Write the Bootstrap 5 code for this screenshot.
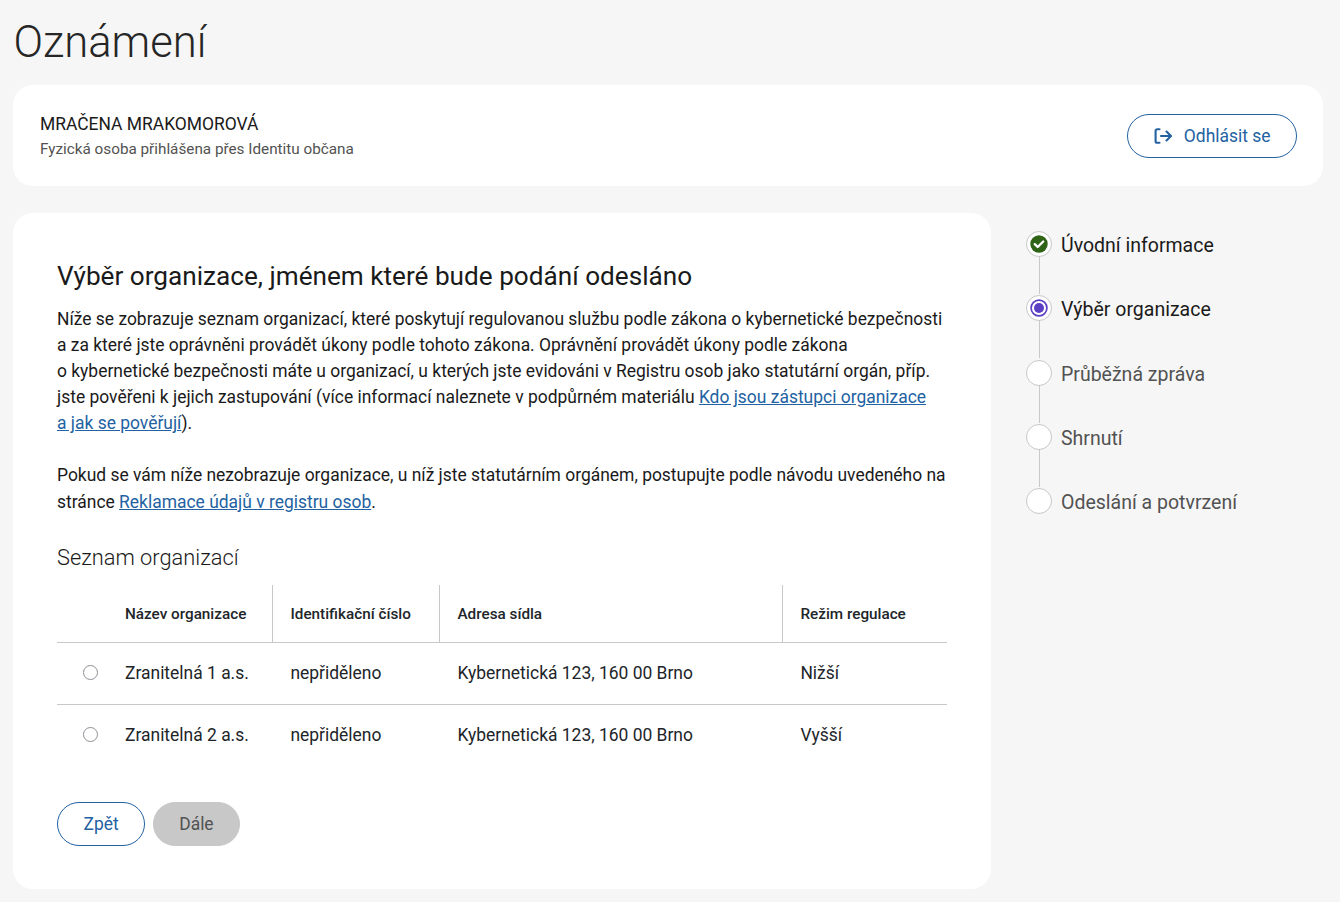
<!DOCTYPE html>
<html lang="cs">

<head>
    <meta charset="UTF-8" />
    <title>Oznámení</title>
    <link rel="stylesheet" href="https://cdn.jsdelivr.net/npm/bootstrap@5.3.3/dist/css/bootstrap.min.css" />
    <style>
        body {
            background: #f6f6f6;
            color: #1a1a1a;
            font-family: Roboto, "Liberation Sans", sans-serif;
            font-size: 17.45px;
            line-height: 26.1px;
        }

        .page-wrap {
            padding: 0 17px 13px 13px;
        }

        .page-title {
            font-size: 43.6px;
            font-weight: 300;
            line-height: 52px;
            margin: 17px 0 16px 0.5px;
            color: #262626;
        }

        .panel {
            background: #fff;
            border-radius: 20px;
        }

        .user-panel {
            padding: 0 26px 0 27px;
            margin-bottom: 27px;
            height: 101px;
        }

        .user-name {
            font-size: 17.45px;
            line-height: 26px;
        }

        .user-sub {
            font-size: 15.27px;
            line-height: 24px;
            color: #525252;
        }

        .btn-round {
            border-radius: 22px;
            height: 44px;
            font-size: 17.45px;
            line-height: 24px;
            padding: 9px 25.5px;
            --bs-btn-color: #2362a2;
            --bs-btn-border-color: #2362a2;
            --bs-btn-hover-color: #fff;
            --bs-btn-hover-bg: #2362a2;
            --bs-btn-hover-border-color: #2362a2;
            --bs-btn-disabled-bg: #c8c8c8;
            --bs-btn-disabled-border-color: #c8c8c8;
            --bs-btn-disabled-color: #525252;
            --bs-btn-disabled-opacity: 1;
        }

        .btn-next {
            padding: 9px 25px;
        }

        .btn-logout {
            padding: 9px 25.5px 9px 26px;
            gap: 11.5px;
        }

        .main-panel {
            width: 978px;
            height: 676px;
            padding: 44px;
            flex: none;
        }

        .main-panel h2 {
            font-size: 26.17px;
            font-weight: 400;
            line-height: 38px;
            margin: 0 0 11px;
        }

        .main-panel p {
            margin: 0 0 26px;
        }

        .main-panel a {
            color: #2362a2;
        }

        .main-panel h3 {
            font-size: 21.8px;
            font-weight: 300;
            line-height: 30px;
            margin: 28px 0 12px;
        }

        .main-panel p:has(+ h3) {
            margin-bottom: 0;
        }

        .org-table {
            --bs-table-bg: transparent;
            margin-bottom: 35px;
            table-layout: fixed;
        }

        .org-table th {
            font-size: 15.27px;
            font-weight: 500;
            height: 58px;
            padding: 2px 18px 0;
            vertical-align: middle;
            border-bottom: 1px solid #c8c8c8;
        }

        .org-table th + th + th,
        .org-table th + th + th + th {
            border-left: 1px solid #c8c8c8;
        }

        .org-table td {
            height: 62px;
            padding: 0 18px 2px 18.4px;
            vertical-align: middle;
            border-bottom: 1px solid #c8c8c8;
        }

        .org-table td:nth-child(2) {
            padding-left: 18px;
        }

        .org-table tr:last-child td {
            border-bottom: 0;
        }

        .org-table td:first-child,
        .org-table th:first-child {
            padding: 0 0 2px 26px;
        }

        .org-radio {
            width: 15px;
            height: 15px;
            margin: 0;
            border-color: #8f8f96;
            display: block;
        }

        .step-list {
            list-style: none;
            margin: -1px 0 0;
            padding: 0 0 0 35px;
        }

        .step-item {
            display: flex;
            align-items: center;
            gap: 9px;
            height: 64.3px;
            color: #525252;
            font-size: 19.5px;
            position: relative;
        }

        .step-item:not(:last-child)::after {
            content: "";
            position: absolute;
            left: 13px;
            top: 44px;
            height: 38px;
            border-left: 1px solid #c8c8c8;
        }

        .step-item.is-on {
            color: #1a1a1a;
        }

        .step-label {
            padding-top: 4px;
        }

        .step-dot {
            width: 26px;
            height: 26px;
            flex: none;
            background: #fff;
            border: 1px solid #c8c8c8;
            border-radius: 50%;
            display: flex;
            align-items: center;
            justify-content: center;
        }
    </style>
</head>

<body>
    <div class="page-wrap">
        <h1 class="page-title">Oznámení</h1>

        <!-- prihlaseny uzivatel -->
        <div class="panel user-panel d-flex justify-content-between align-items-center">
            <div>
                <div class="user-name">MRAČENA MRAKOMOROVÁ</div>
                <div class="user-sub">Fyzická osoba přihlášena přes Identitu občana</div>
            </div>
            <button type="button" class="btn btn-outline-primary btn-round btn-logout d-flex align-items-center">
                <svg width="18" height="18" viewBox="0 0 18 18" fill="none" stroke="currentColor" stroke-width="2.1" stroke-linecap="round" stroke-linejoin="round">
                    <path d="M5.5 2.2H3.2a1.6 1.6 0 0 0-1.6 1.6v10.4a1.6 1.6 0 0 0 1.6 1.6h2.3" />
                    <path d="M7 9h10M12.5 4.5 17 9l-4.5 4.5" />
                </svg>
                Odhlásit se
            </button>
        </div>

        <div class="d-flex">
            <div class="panel main-panel">
                <h2>Výběr organizace, jménem které bude podání odesláno</h2>
                <p>Níže se zobrazuje seznam organizací, které poskytují regulovanou službu podle zákona o kybernetické bezpečnosti a&nbsp;za které jste oprávněni provádět úkony podle tohoto zákona. Oprávnění provádět úkony podle zákona o&nbsp;kybernetické bezpečnosti máte u&nbsp;organizací, u&nbsp;kterých jste evidováni v&nbsp;Registru osob jako statutární orgán, příp. jste pověřeni k&nbsp;jejich zastupování (více informací naleznete v&nbsp;podpůrném materiálu <a href="#">Kdo jsou zástupci organizace a&nbsp;jak se pověřují</a>).</p>
                <p>Pokud se vám níže nezobrazuje organizace, u&nbsp;níž jste statutárním orgánem, postupujte podle návodu uvedeného na stránce <a href="#">Reklamace údajů v&nbsp;registru osob</a>.</p>
                <h3>Seznam organizací</h3>
                <table class="table org-table">
                    <thead>
                        <tr>
                            <th style="width: 50px"></th>
                            <th style="width: 165px">Název organizace</th>
                            <th style="width: 167px">Identifikační číslo</th>
                            <th style="width: 343px">Adresa sídla</th>
                            <th>Režim regulace</th>
                        </tr>
                    </thead>
                    <tbody>
                        <tr>
                            <td><input class="form-check-input org-radio" type="radio" name="org" /></td>
                            <td>Zranitelná 1 a.s.</td>
                            <td>nepřiděleno</td>
                            <td>Kybernetická 123, 160 00 Brno</td>
                            <td>Nižší</td>
                        </tr>
                        <tr>
                            <td><input class="form-check-input org-radio" type="radio" name="org" /></td>
                            <td>Zranitelná 2 a.s.</td>
                            <td>nepřiděleno</td>
                            <td>Kybernetická 123, 160 00 Brno</td>
                            <td>Vyšší</td>
                        </tr>
                    </tbody>
                </table>
                <div class="d-flex gap-2">
                    <button type="button" class="btn btn-outline-primary btn-round">Zpět</button>
                    <button type="button" class="btn btn-round btn-next" disabled>Dále</button>
                </div>
            </div>

            <!-- kroky formulare -->
            <ol class="step-list flex-grow-1">
                <li class="step-item is-on">
                    <span class="step-dot">
                        <svg width="20" height="20" viewBox="0 0 20 20">
                            <circle cx="10" cy="10" r="8.7" fill="#2f6417" />
                            <path d="M5.8 10.2 8.7 13 14.2 7.5" fill="none" stroke="#fff" stroke-width="2.4" stroke-linecap="round" stroke-linejoin="round" />
                        </svg>
                    </span>
                    <span class="step-label">Úvodní informace</span>
                </li>
                <li class="step-item is-on">
                    <span class="step-dot">
                        <svg width="20" height="20" viewBox="0 0 20 20">
                            <circle cx="10" cy="10" r="7.9" fill="#fff" stroke="#5b3fc4" stroke-width="1.7" />
                            <circle cx="10" cy="10" r="5" fill="#5b3fc4" />
                        </svg>
                    </span>
                    <span class="step-label">Výběr organizace</span>
                </li>
                <li class="step-item"><span class="step-dot"></span><span class="step-label">Průběžná zpráva</span></li>
                <li class="step-item"><span class="step-dot"></span><span class="step-label">Shrnutí</span></li>
                <li class="step-item"><span class="step-dot"></span><span class="step-label">Odeslání a potvrzení</span></li>
            </ol>
        </div>
    </div>
    <script src="https://cdn.jsdelivr.net/npm/bootstrap@5.3.3/dist/js/bootstrap.bundle.min.js"></script>
</body>

</html>
